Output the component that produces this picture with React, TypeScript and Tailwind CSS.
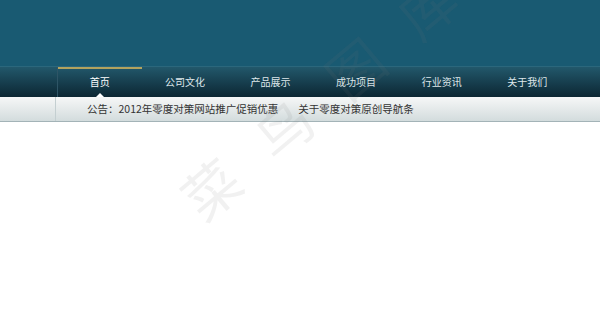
import React from "react";

const navItems = ["首页", "公司文化", "产品展示", "成功项目", "行业资讯", "关于我们"];

export default function App() {
  return (
    <div
      className="relative w-[600px] h-[332px] overflow-hidden bg-white"
      style={{ fontFamily: '"Noto Sans CJK SC", "Liberation Sans", sans-serif' }}
    >
      {/* header */}
      <div className="h-[66px] bg-[#195a72]" />
      {/* nav bar */}
      <div className="relative h-[31px] bg-gradient-to-b from-[#22586b] via-[#173f4f] to-[#0c2733] border-t border-[#2b677c]">
        <div className="flex h-full pl-[56.5px]">
          {navItems.map((item, i) => (
            <div
              key={item}
              className={
                "relative flex h-full w-[85.6px] items-center justify-center text-[10px] leading-none " +
                (i === 0 ? "text-white border-l border-[#2e5566]" : "text-[#dfe8eb]")
              }
            >
              {i === 0 && (
                <>
                  <div className="absolute left-0 right-0 top-0 h-[2px] bg-[#b3a35e]" />
                  <div className="absolute bottom-0 left-1/2 -translate-x-1/2 h-0 w-0 border-x-[4px] border-b-[4px] border-x-transparent border-b-white" />
                </>
              )}
              <span>{item}</span>
            </div>
          ))}
        </div>
      </div>
      {/* notice bar */}
      <div className="h-[25px] bg-gradient-to-b from-[#f6f7f7] to-[#d3dcdd] border-b border-[#a3b3b7]">
        <div className="flex h-full items-center">
          <div className="h-full w-[56px] border-r border-[#c4cfd1]" />
          <span className="ml-[31px] text-[10.5px] leading-none text-[#333]">公告：2012年零度对策网站推广促销优惠</span>
          <span className="ml-[20px] text-[10.5px] leading-none text-[#333]">关于零度对策原创导航条</span>
        </div>
      </div>
      {/* watermark */}
      <div
        className="pointer-events-none absolute left-[130px] top-[67px] flex h-[60px] w-[376px] -rotate-[40deg] items-center text-[56px] leading-none text-[rgba(120,120,120,0.1)]"
      >
        {["菜", "鸟", "图", "库"].map((c) => (
          <span key={c} className="w-[94px] text-center">
            {c}
          </span>
        ))}
      </div>
    </div>
  );
}
